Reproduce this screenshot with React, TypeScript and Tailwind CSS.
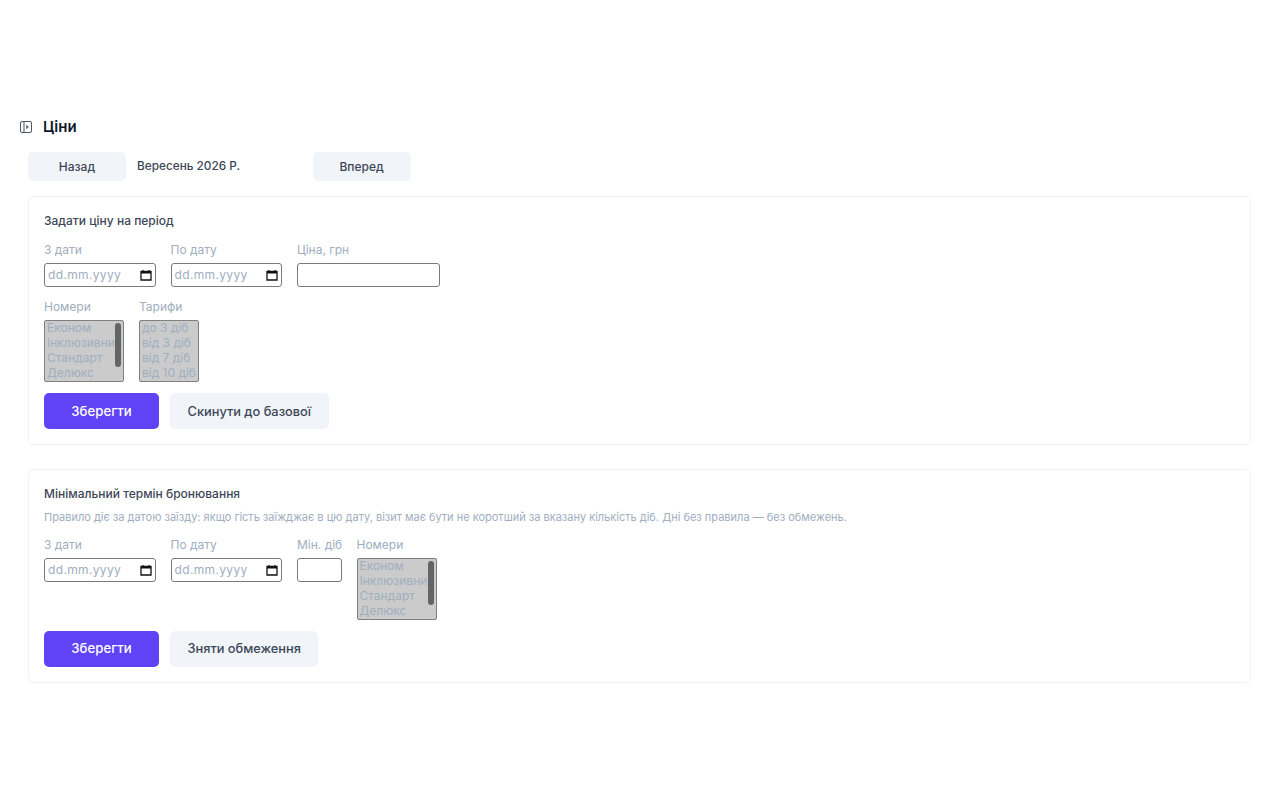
import React from "react";

const rooms = ["Економ", "Інклюзивний", "Стандарт", "Делюкс"];
const tariffs = ["до 3 діб", "від 3 діб", "від 7 діб", "від 10 діб"];

const labelCls = "block whitespace-nowrap text-[12px] leading-[20px] text-[#a0aec0] mb-[3px]";
const boxCls = "h-[24px] rounded-[3px] border border-[#7a7a7a] bg-white";

const CalendarIcon = () => (
  <svg width="12" height="12" viewBox="0 0 12 12" className="shrink-0">
    <path d="M1 2.5h10v8.5H1z" fill="none" stroke="#111" strokeWidth="1.3" />
    <path d="M1 2h10v2.5H1z" fill="#111" />
    <path d="M3 1v2M9 1v2" stroke="#111" strokeWidth="1.2" />
  </svg>
);

const DateField = ({ label }: { label: string }) => (
  <div>
    <span className={labelCls}>{label}</span>
    <div className={`${boxCls} w-[111.5px] flex items-center justify-between pl-[3px] pr-[3px]`}>
      <span className="text-[12px] tracking-[0.35px] text-[#a0aec0]">dd.mm.yyyy</span>
      <CalendarIcon />
    </div>
  </div>
);

const ListBox = ({
  label,
  items,
  width,
  scroll,
}: {
  label: string;
  items: string[];
  width: string;
  scroll?: boolean;
}) => (
  <div>
    <span className={labelCls}>{label}</span>
    <div className={`relative ${width} h-[62px] overflow-hidden rounded-[2px] border border-[#808080] bg-[#cbcbcb] pl-[2px] text-[12px] leading-[15px] text-[#a0aec0]`}>
      <div className="-mt-[1px]">
        {items.map((item) => (
          <div key={item} className="whitespace-nowrap">
            {item}
          </div>
        ))}
      </div>
      {scroll && (
        <div className="absolute right-[2px] top-[2px] h-[44px] w-[6px] rounded-full bg-[#646464]" />
      )}
    </div>
  </div>
);

const Actions = ({ secondary }: { secondary: string }) => (
  <div className="flex gap-[11px]">
    <button className="h-[36px] w-[115px] rounded-[5px] bg-[#5f43f5] pt-[1px] text-[13.2px] font-medium text-white">
      Зберегти
    </button>
    <button className="h-[36px] rounded-[5px] bg-[#f1f5f9] px-[17.5px] pt-[1px] text-[12.8px] font-medium text-[#3d4656]">
      {secondary}
    </button>
  </div>
);

export default function App() {
  return (
    <div className="min-h-[800px] bg-white px-[20px] pt-[117px] font-['Inter',sans-serif]">
      <div className="flex items-center gap-[11px] h-[20px]">
        <svg width="12" height="12" viewBox="0 0 12 12" fill="none" stroke="#4b5563" strokeWidth="1">
          <rect x="0.5" y="0.5" width="11" height="11" rx="1.5" />
          <path d="M4 .5v11" />
          <path d="M6.5 4.2 8.5 6l-2 1.8z" fill="#4b5563" strokeWidth="0.5" />
        </svg>
        <h1 className="text-[15px] font-semibold text-[#0f172a]">Ціни</h1>
      </div>

      <div className="ml-[8px] mt-[15px] flex items-center">
        <button className="h-[29px] w-[98px] rounded-[5px] bg-[#f1f5f9] text-[12px] font-medium text-[#3d4656]">
          Назад
        </button>
        <span className="ml-[11px] w-[175.5px] text-[11.8px] font-medium text-[#3d4656]">Вересень 2026 Р.</span>
        <button className="h-[29px] w-[98px] rounded-[5px] bg-[#f1f5f9] text-[12px] font-medium text-[#3d4656]">
          Вперед
        </button>
      </div>

      <section className="ml-[8px] mr-[9px] mt-[15px] h-[249px] rounded-[4px] border border-[#f1f5f9] px-[15px] pt-[15px]">
        <h2 className="text-[12px] leading-[18px] font-medium text-[#3d4656]">Задати ціну на період</h2>
        <div className="mt-[10px] flex gap-[15px]">
          <DateField label="З дати" />
          <DateField label="По дату" />
          <div>
            <span className={labelCls}>Ціна, грн</span>
            <div className={`${boxCls} w-[143px]`} />
          </div>
        </div>
        <div className="mt-[10px] flex gap-[15px]">
          <ListBox label="Номери" items={rooms} width="w-[80px]" scroll />
          <ListBox label="Тарифи" items={tariffs} width="w-[60px]" />
        </div>
        <div className="mt-[11px]">
          <Actions secondary="Скинути до базової" />
        </div>
      </section>

      <section className="ml-[8px] mr-[9px] mt-[23.5px] h-[214.5px] rounded-[4px] border border-[#f1f5f9] px-[15px] pt-[15px]">
        <h2 className="text-[12px] leading-[18px] font-medium text-[#3d4656]">Мінімальний термін бронювання</h2>
        <p className="mt-[6px] text-[11px] leading-[16px] text-[#a0aec0]">
          Правило діє за датою заїзду: якщо гість заїжджає в цю дату, візит має бути не коротший за вказану кількість діб. Дні без правила — без обмежень.
        </p>
        <div className="mt-[10px] flex gap-[15px]">
          <DateField label="З дати" />
          <DateField label="По дату" />
          <div className="w-[44.5px]">
            <span className={labelCls}>Мін. діб</span>
            <div className={`${boxCls} w-[44.5px]`} />
          </div>
          <ListBox label="Номери" items={rooms} width="w-[80px]" scroll />
        </div>
        <div className="mt-[11px]">
          <Actions secondary="Зняти обмеження" />
        </div>
      </section>
    </div>
  );
}
